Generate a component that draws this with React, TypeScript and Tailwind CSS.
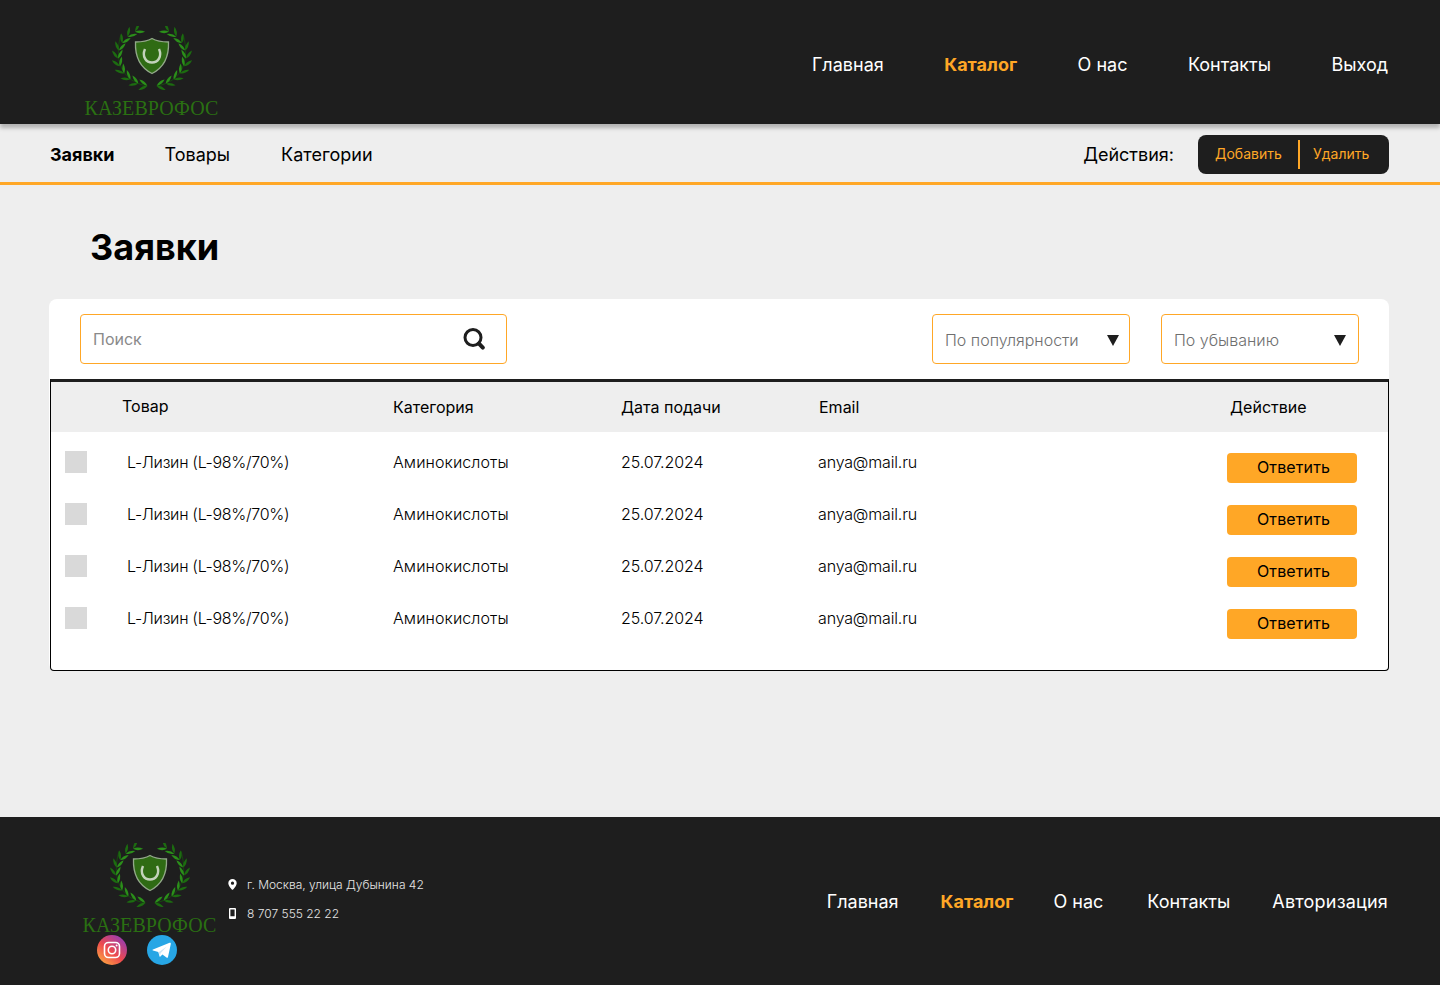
import React from "react";

const rows = [1, 2, 3, 4];

// one side of the wreath, mirrored for the right one
const nodes = Array.from({ length: 10 }, (_, i) => {
  const angle = 98 + i * 15.8;
  const a = (angle * Math.PI) / 180;
  return {
    x: 41 + 34 * Math.cos(a),
    y: 31 + 29 * Math.sin(a),
    deg: angle + 90,
  };
});

function Branch() {
  const leaf = "M0 0 Q4.5 -2.7 10 0 Q4.5 2.7 0 0Z";
  return (
    <g>
      <path d="M36.5 60 C12 56 2 36 10 8" fill="none" stroke="#14520b" strokeWidth="0.8" />
      {nodes.map((n, i) => (
        <g key={i} transform={`translate(${n.x} ${n.y}) rotate(${n.deg})`}>
          <path d={leaf} transform="rotate(-34)" fill="#1c6c10" />
          <path d={leaf} transform="rotate(30)" fill="#2b8f1a" />
        </g>
      ))}
    </g>
  );
}

function Wreath() {
  return (
    <svg width="82" height="64" viewBox="0 0 82 64">
      <Branch />
      <g transform="translate(82 0) scale(-1 1)">
        <Branch />
      </g>
      <path
        d="M41 12.5 C46 15.5 51 16 57.5 16 C58 28.5 55 40.5 41 47.5 C27 40.5 24 28.5 24.5 16 C31 16 36 15.5 41 12.5Z"
        fill="#2f6b14"
        stroke="#93a98a"
        strokeWidth="1.3"
      />
      <path
        d="M34 23 C30.5 31 35.5 36.5 41 36.5 C46.5 36.5 51.5 31 48 23"
        fill="none"
        stroke="#c3d2bb"
        strokeWidth="2.4"
      />
    </svg>
  );
}

function Logo() {
  return (
    <div className="flex flex-col items-center w-[135px]">
      <Wreath />
      <div className="mt-[6px] font-['Liberation_Serif',serif] text-[#2a7012] text-[20px] leading-[24px] whitespace-nowrap tracking-[0.1px]">
        КАЗЕВРОФОС
      </div>
    </div>
  );
}

function Caret() {
  return (
    <svg className="mt-[2px]" width="12" height="11" viewBox="0 0 12 11">
      <path d="M0 0H12L6 11Z" fill="#1e1e1e" />
    </svg>
  );
}

function Instagram() {
  return (
    <svg width="30" height="30" viewBox="0 0 30 30">
      <defs>
        <linearGradient id="ig" x1="0.1" y1="1" x2="0.9" y2="0">
          <stop offset="0" stopColor="#fdb23f" />
          <stop offset="0.45" stopColor="#ee4a4e" />
          <stop offset="1" stopColor="#8a3ac0" />
        </linearGradient>
      </defs>
      <circle cx="15" cy="15" r="15" fill="url(#ig)" />
      <rect x="7.5" y="7.5" width="15" height="15" rx="4" fill="none" stroke="#fff" strokeWidth="1.6" />
      <circle cx="15" cy="15" r="3.7" fill="none" stroke="#fff" strokeWidth="1.6" />
      <circle cx="19.6" cy="10.4" r="1" fill="#fff" />
    </svg>
  );
}

function Telegram() {
  return (
    <svg width="30" height="30" viewBox="0 0 30 30">
      <circle cx="15" cy="15" r="15" fill="#27a6e5" />
      <path
        d="M6 14.6L22.6 7.8C23.4 7.5 24 8 23.8 8.9L21 22C20.8 22.9 20.2 23.1 19.5 22.6L15.4 19.6L13.4 21.5C13 21.9 12.6 21.8 12.5 21.2L11.3 17L6 15.6C5.3 15.4 5.3 14.9 6 14.6Z"
        fill="#fff"
      />
      <path d="M11.6 17.2L19.8 11.4L13.6 18.2L13.2 21" fill="#cfe6f5" />
    </svg>
  );
}

export default function App() {
  return (
    <div className="min-h-[985px] bg-[#eeeeee] flex flex-col font-['Inter',sans-serif] text-black">
      {/* top bar */}
      <header className="relative z-10 h-[124px] bg-[#1e1e1e] flex items-start justify-between pl-[84px] pr-[52px] shadow-[0_4px_4px_rgba(0,0,0,0.25)]">
        <div className="pt-[26px]">
          <Logo />
        </div>
        <nav className="flex gap-[60.5px] pt-[54px] text-[18px] leading-[22px] text-white">
          <a>Главная</a>
          <a className="font-bold text-[#ffa726]">Каталог</a>
          <a>О нас</a>
          <a>Контакты</a>
          <a>Выход</a>
        </nav>
      </header>

      <div className="h-[61px] pt-[3px] border-b-[3px] border-[#ffa726] flex items-center justify-between pl-[50px] pr-[51px]">
        <div className="flex gap-[50px] text-[18px] leading-[22px]">
          <a className="font-bold">Заявки</a>
          <a>Товары</a>
          <a className="ml-px">Категории</a>
        </div>
        <div className="flex items-center gap-[24px]">
          <span className="text-[18px] leading-[22px]">Действия:</span>
          <div className="w-[191px] h-[39px] rounded-lg bg-[#1e1e1e] flex items-center pl-[17px] text-[14px] text-[#ffa726]">
            <span className="w-[83px] pb-[2px]">Добавить</span>
            <span className="w-[2px] h-[29px] bg-[#ffa726]" />
            <span className="ml-[13px] pb-[2px]">Удалить</span>
          </div>
        </div>
      </div>

      <main className="flex-1 px-[50px]">
        <h1 className="ml-[40px] mt-[40px] text-[36px] leading-[44px] font-bold">Заявки</h1>

        <section className="mt-[30px] -ml-px mr-px bg-white rounded-lg">
          <div className="h-[80px] pt-[15px] pl-[31px] pr-[30px] flex justify-between">
            <div className="w-[427px] h-[50px] border border-[#ffa726] rounded-[4px] flex items-center justify-between pl-[12px] pr-[21px]">
              <span className="text-[16px] text-[#8a8a8a]">Поиск</span>
              <svg width="22" height="22" viewBox="0 0 22 22" fill="none">
                <circle cx="10" cy="9.5" r="8" stroke="#1e1e1e" strokeWidth="3" />
                <path d="M16 15.6L19.8 19.6" stroke="#1e1e1e" strokeWidth="4" strokeLinecap="round" />
              </svg>
            </div>
            <div className="flex gap-[31px]">
              <div className="w-[198px] h-[50px] border border-[#ffa726] rounded-[4px] flex items-center justify-between pl-[12px] pr-[10px]">
                <span className="text-[16px] font-light text-[#6f6f6f] pt-[2px]">По популярности</span>
                <Caret />
              </div>
              <div className="w-[198px] h-[50px] border border-[#ffa726] rounded-[4px] flex items-center justify-between pl-[12px] pr-[12px]">
                <span className="text-[16px] font-light text-[#6f6f6f] pt-[2px]">По убыванию</span>
                <Caret />
              </div>
            </div>
          </div>

          <div className="ml-px border-t-[3px] border-t-[#1e1e1e] border-x border-b border-x-black border-b-black rounded-b-[4px] overflow-hidden">
            <div className="h-[50px] bg-[#eeeeee] grid grid-cols-[342px_228px_198px_411px_1fr] items-center text-[16px]">
              <span className="pl-[71px] -mt-[2px]">Товар</span>
              <span>Категория</span>
              <span>Дата подачи</span>
              <span>Email</span>
              <span>Действие</span>
            </div>
            <div className="pt-[19px] pb-[11px]">
              {rows.map((r) => (
                <div
                  key={r}
                  className="h-[52px] grid grid-cols-[342px_228px_197px_412px_1fr] items-start text-[16px] leading-[22px] font-light"
                >
                  <div className="flex pl-[14px] gap-[40px]">
                    <span className="w-[22px] h-[22px] bg-[#d9d9d9]" />
                    <span className="tracking-[-0.3px]">L-Лизин (L-98%/70%)</span>
                  </div>
                  <span className="tracking-[0.08px]">Аминокислоты</span>
                  <span className="tracking-[-0.1px]">25.07.2024</span>
                  <span className="tracking-[-0.16px]">anya@mail.ru</span>
                  <button className="-ml-[3px] mt-[2px] w-[130px] h-[30px] pl-[3px] pb-[2px] rounded-[4px] bg-[#ffa726] text-[16px] font-normal tracking-[0.12px]">
                    Ответить
                  </button>
                </div>
              ))}
            </div>
          </div>
        </section>
      </main>

      <footer className="h-[168px] bg-[#1e1e1e] flex items-start pl-[82px] pr-[52px] text-white">
        <div className="relative pt-[26px]">
          <Logo />
          <div className="absolute left-[15px] top-[118px] flex gap-[20px]">
            <Instagram />
            <Telegram />
          </div>
        </div>
        <div className="ml-[11px] mt-[60px] flex flex-col gap-[14px] text-[12px] leading-[15px] font-light text-[#e6e6e6]">
          <div className="flex items-center gap-[10px]">
            <svg width="9" height="11" viewBox="0 0 9 11">
              <path
                fillRule="evenodd"
                d="M4.5 0A4.2 4.2 0 0 0 .3 4.2C.3 7 4.5 11 4.5 11S8.7 7 8.7 4.2A4.2 4.2 0 0 0 4.5 0ZM4.5 2.6a1.6 1.6 0 1 1 0 3.2 1.6 1.6 0 0 1 0-3.2Z"
                fill="#fff"
              />
            </svg>
            <span>г. Москва, улица Дубынина 42</span>
          </div>
          <div className="flex items-center gap-[10px]">
            <svg width="9" height="11" viewBox="0 0 9 11">
              <path
                fillRule="evenodd"
                d="M2 0H7A1 1 0 0 1 8 1V10A1 1 0 0 1 7 11H2A1 1 0 0 1 1 10V1A1 1 0 0 1 2 0ZM2.4 1.4V8.2H6.6V1.4Z"
                fill="#fff"
              />
            </svg>
            <span>8 707 555 22 22</span>
          </div>
        </div>
        <nav className="ml-auto mt-[74px] flex gap-[42px] text-[18px] leading-[22px]">
          <a>Главная</a>
          <a className="font-bold text-[#ffa726]">Каталог</a>
          <a className="-ml-[2px] mr-[2px]">О нас</a>
          <a>Контакты</a>
          <a className="tracking-[0.2px]">Авторизация</a>
        </nav>
      </footer>
    </div>
  );
}
